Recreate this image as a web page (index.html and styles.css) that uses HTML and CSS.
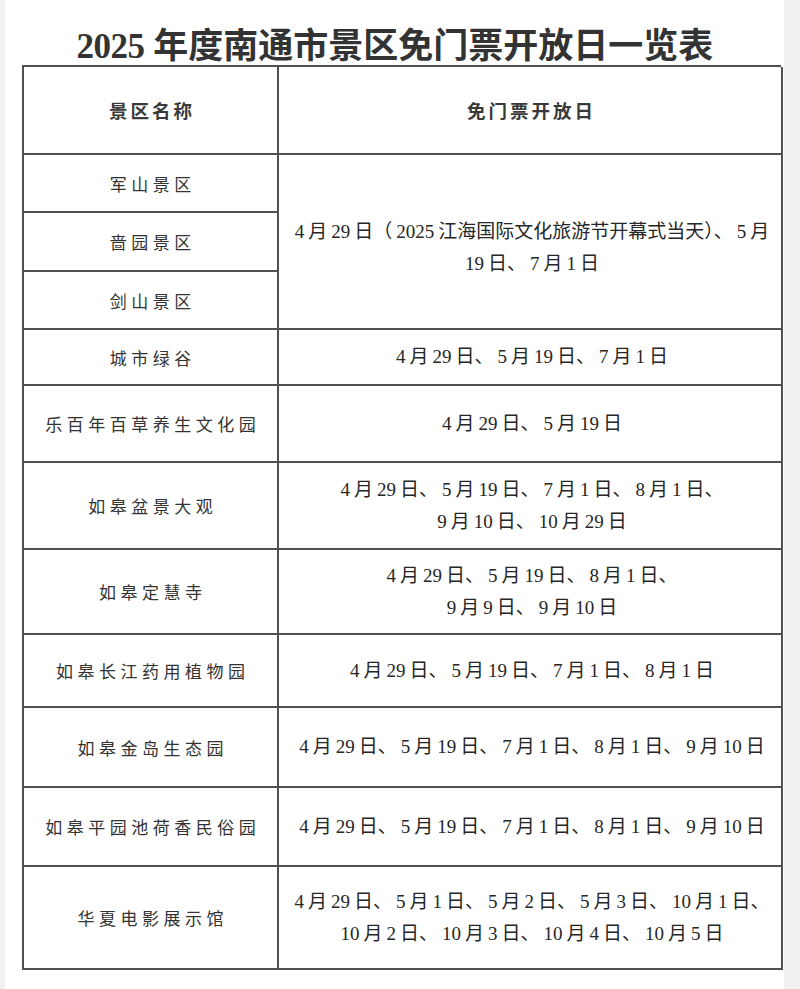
FILE: index.html
```html
<!DOCTYPE html>
<html lang="zh-CN">
<head>
<meta charset="utf-8">
<title>2025年度南通市景区免门票开放日一览表</title>
<link rel="stylesheet" href="styles.css">
</head>
<body>
<div class="page">
  <h1 class="title"><span class="yr">2025</span> 年度南通市景区免门票开放日一览表</h1>
  <div class="sheet">
    <div class="cell head">景区名称</div>
    <div class="cell head">免门票开放日</div>

    <div class="cell name">军山景区</div>
    <div class="cell date merged"><p class="txt"><span class="n">4</span>月<span class="n">29</span>日（<span class="n">2025</span>江海国际文化旅游节开幕式当天）、<span class="n">5</span>月<br><span class="n">19</span>日、<span class="n">7</span>月<span class="n">1</span>日</p></div>
    <div class="cell name">啬园景区</div>
    <div class="cell name">剑山景区</div>

    <div class="cell name">城市绿谷</div>
    <div class="cell date"><p class="txt"><span class="n">4</span>月<span class="n">29</span>日、<span class="n">5</span>月<span class="n">19</span>日、<span class="n">7</span>月<span class="n">1</span>日</p></div>

    <div class="cell name">乐百年百草养生文化园</div>
    <div class="cell date"><p class="txt"><span class="n">4</span>月<span class="n">29</span>日、<span class="n">5</span>月<span class="n">19</span>日</p></div>

    <div class="cell name">如皋盆景大观</div>
    <div class="cell date"><p class="txt"><span class="n">4</span>月<span class="n">29</span>日、<span class="n">5</span>月<span class="n">19</span>日、<span class="n">7</span>月<span class="n">1</span>日、<span class="n">8</span>月<span class="n">1</span>日、<br><span class="n">9</span>月<span class="n">10</span>日、<span class="n">10</span>月<span class="n">29</span>日</p></div>

    <div class="cell name">如皋定慧寺</div>
    <div class="cell date"><p class="txt"><span class="n">4</span>月<span class="n">29</span>日、<span class="n">5</span>月<span class="n">19</span>日、<span class="n">8</span>月<span class="n">1</span>日、<br><span class="n">9</span>月<span class="n">9</span>日、<span class="n">9</span>月<span class="n">10</span>日</p></div>

    <div class="cell name">如皋长江药用植物园</div>
    <div class="cell date"><p class="txt"><span class="n">4</span>月<span class="n">29</span>日、<span class="n">5</span>月<span class="n">19</span>日、<span class="n">7</span>月<span class="n">1</span>日、<span class="n">8</span>月<span class="n">1</span>日</p></div>

    <div class="cell name">如皋金岛生态园</div>
    <div class="cell date"><p class="txt"><span class="n">4</span>月<span class="n">29</span>日、<span class="n">5</span>月<span class="n">19</span>日、<span class="n">7</span>月<span class="n">1</span>日、<span class="n">8</span>月<span class="n">1</span>日、<span class="n">9</span>月<span class="n">10</span>日</p></div>

    <div class="cell name">如皋平园池荷香民俗园</div>
    <div class="cell date"><p class="txt"><span class="n">4</span>月<span class="n">29</span>日、<span class="n">5</span>月<span class="n">19</span>日、<span class="n">7</span>月<span class="n">1</span>日、<span class="n">8</span>月<span class="n">1</span>日、<span class="n">9</span>月<span class="n">10</span>日</p></div>

    <div class="cell name">华夏电影展示馆</div>
    <div class="cell date"><p class="txt"><span class="n">4</span>月<span class="n">29</span>日、<span class="n">5</span>月<span class="n">1</span>日、<span class="n">5</span>月<span class="n">2</span>日、<span class="n">5</span>月<span class="n">3</span>日、<span class="n">10</span>月<span class="n">1</span>日、<br><span class="n">10</span>月<span class="n">2</span>日、<span class="n">10</span>月<span class="n">3</span>日、<span class="n">10</span>月<span class="n">4</span>日、<span class="n">10</span>月<span class="n">5</span>日</p></div>
  </div>
</div>
</body>
</html>
```

FILE: styles.css
```css
* { box-sizing: border-box; }

html, body {
  margin: 0;
  padding: 0;
}

body {
  background: #f1f1f1;
  font-family: "Noto Sans CJK SC", sans-serif;
  color: #2b2b2b;
}

.page {
  margin-left: 5px;
  width: 779px;
  min-height: 989px;
  background: #ffffff;
  padding: 0 0 0 17px;
}

.title {
  margin: 0;
  padding: 30px 13px 0 0;
  width: 759px;
  height: 65px;
  line-height: 34px;
  font-size: 35px;
  font-weight: 700;
  font-family: "Liberation Serif", "Noto Sans CJK SC", serif;
  color: #333333;
  text-align: center;
  white-space: nowrap;
}

.title .yr {
  letter-spacing: -0.5px;
}

.sheet {
  width: 759px;
  display: grid;
  grid-template-columns: 255px 504px;
  grid-template-rows: 88px 58px 59px 58px 56px 77px 87px 85px 73px 80px 79px 103px;
  border-top: 2px solid #505050;
  border-left: 2px solid #505050;
}

.cell {
  border-right: 2px solid #505050;
  border-bottom: 2px solid #505050;
  display: flex;
  align-items: center;
  justify-content: center;
  text-align: center;
}

.head {
  font-size: 18.5px;
  font-weight: 700;
  letter-spacing: 3px;
  padding-left: 3px;
  color: #3a3a3a;
}

.name {
  font-size: 17px;
  letter-spacing: 4.5px;
  padding-left: 4.5px;
  color: #333333;
}

.date {
  font-family: "Liberation Serif", "Noto Sans CJK SC", serif;
  font-size: 19px;
  line-height: 32px;
  color: #262626;
  white-space: nowrap;
}

.txt {
  margin: 0;
}

.merged {
  grid-row: span 3;
  padding-top: 12px;
}

.n {
  padding: 0 4px;
}
```
